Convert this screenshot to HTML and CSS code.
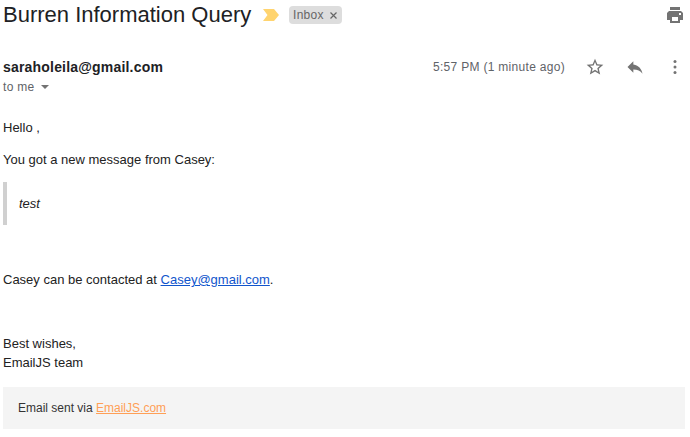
FILE: index.html
```html
<!DOCTYPE html>
<html lang="en">
<head>
<meta charset="utf-8">
<title>Burren Information Query</title>
<link rel="stylesheet" href="styles.css">
</head>
<body>
<header class="subject">
  <h1 class="title">Burren Information Query</h1>
  <svg class="marker" width="17" height="12" viewBox="0 0 17 12"><path fill="#ffd46f" d="M0 0h11L16 6l-5 6H0l4.500-6z"/></svg>
  <span class="label"><span class="label-name">Inbox</span><svg width="7" height="7" viewBox="0 0 7 7"><path d="M.5.5l6 6M6.500.5l-6 6" stroke="#666" stroke-width="1.200"/></svg></span>
  <svg class="print" width="16" height="16" viewBox="0 0 16 16"><path fill="#737373" fill-rule="evenodd" d="M3 0h10v3H3zM2 4h12l2 2v7h-3v3H3v-3H0V6l2-2zM5 10v4h6v-4zM12 6v2h2V6z"/></svg>
</header>
<section class="meta">
  <strong class="sender">saraholeila@gmail.com</strong>
  <span class="time">5:57 PM (1 minute ago)</span>
  <svg class="icon star" viewBox="0 0 24 24"><path fill="#737373" d="M22 9.240l-7.190-.62L12 2 9.190 8.630 2 9.240l5.460 4.730L5.820 21 12 17.270 18.180 21l-1.630-7.030L22 9.240zM12 15.400l-3.760 2.270 1-4.280-3.320-2.880 4.380-.38L12 6.100l1.710 4.040 4.380.38-3.320 2.880 1 4.280L12 15.400z"/></svg>
  <svg class="icon reply" viewBox="0 0 24 24"><path fill="#737373" d="M10 9V5l-7 7 7 7v-4.100c5 0 8.500 1.600 11 5.100-1-5-4-10-11-11z"/></svg>
  <svg class="icon more" viewBox="0 0 20 20"><g fill="#737373"><circle cx="10" cy="4.500" r="1.500"/><circle cx="10" cy="10" r="1.500"/><circle cx="10" cy="15.500" r="1.500"/></g></svg>
</section>
<div class="recipient"><span class="recipient-name">to me</span><svg width="8" height="4" viewBox="0 0 8 4"><path fill="#737373" d="M0 0h8L4 4z"/></svg></div>
<main class="message">
  <p class="greeting">Hello ,</p>
  <p class="intro">You got a new message from Casey:</p>
  <blockquote class="quote">test</blockquote>
  <p class="contact">Casey can be contacted at <a class="mail" href="#">Casey@gmail.com</a>.</p>
  <p class="closing"><span>Best wishes,</span><br><span class="team">EmailJS team</span></p>
</main>
<footer class="footer"><span class="via">Email sent via <a class="service" href="#">EmailJS.com</a></span></footer>
</body>
</html>
```
FILE: styles.css
```css
body {
  margin: 0;
  padding: 0 5px 0 3px;
  height: 437px;
  box-sizing: border-box;
  overflow: hidden;
  background: #fff;
  color: #222;
  font: 13px/19px "Liberation Sans", Arial, sans-serif;
}
p, h1, blockquote { margin: 0; }
svg { display: block; flex: none; }
.subject { display: flex; align-items: center; height: 30px; margin-right: 2px; }
.title { font-size: 22px; line-height: 28px; font-weight: 400; color: #202124; white-space: nowrap; width: 260px; }
.marker { margin-right: 9px; }
.label {
  display: flex;
  align-items: center;
  justify-content: space-between;
  box-sizing: border-box;
  width: 53px;
  height: 18px;
  padding: 0 5px 0 4px;
  border-radius: 4px;
  background: #ddd;
  color: #666;
  font-size: 12px;
  line-height: 18px;
  letter-spacing: .3px;
}
.print { margin-left: auto; }
.meta { display: flex; align-items: center; height: 20px; margin: 27px -5px 0 0; }
.sender { font-size: 14px; color: #202124; letter-spacing: .19px; }
.time { margin-left: auto; margin-right: 20px; font-size: 12px; color: #5f6368; letter-spacing: .3px; }
.icon { width: 20px; height: 20px; margin-right: 20px; }
.more { margin-right: 5px; }
.recipient { display: flex; align-items: center; height: 20px; color: #5f6368; font-size: 12px; letter-spacing: .3px; }
.recipient-name { width: 38px; }
.message { height: 290px; padding-top: 21px; box-sizing: border-box; }
.intro { margin-top: 13px; }
.quote { margin-top: 13px; border-left: 4px solid #d0d0d0; padding: 12px; font-style: italic; }
.contact { margin-top: 45px; }
.mail { color: #15c; }
.closing { margin-top: 45px; }
.footer { height: 42px; box-sizing: border-box; padding: 12px 15px 11px; background: #f4f4f4; font-size: 12px; color: #333; }
.service { color: #ff9f56; }
```
